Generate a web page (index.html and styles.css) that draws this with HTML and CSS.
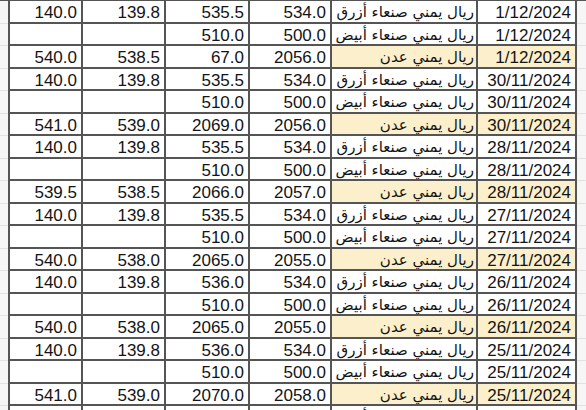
FILE: index.html
```html
<!DOCTYPE html>
<html lang="ar">
<head>
<meta charset="utf-8">
<link rel="stylesheet" href="styles.css">
</head>
<body>
<div class="sheet">
  <div class="row"><div class="gut"></div><div class="c">140.0</div><div class="c">139.8</div><div class="c">535.5</div><div class="c">534.0</div><div class="c ar" dir="rtl">ريال يمني صنعاء أزرق</div><div class="c">1/12/2024</div><div class="gut"></div></div>
  <div class="row"><div class="gut"></div><div class="c"></div><div class="c"></div><div class="c">510.0</div><div class="c">500.0</div><div class="c ar" dir="rtl">ريال يمني صنعاء أبيض</div><div class="c">1/12/2024</div><div class="gut"></div></div>
  <div class="row aden"><div class="gut"></div><div class="c">540.0</div><div class="c">538.5</div><div class="c">67.0</div><div class="c">2056.0</div><div class="c ar hl" dir="rtl">ريال يمني عدن</div><div class="c hl">1/12/2024</div><div class="gut"></div></div>

  <div class="row"><div class="gut"></div><div class="c">140.0</div><div class="c">139.8</div><div class="c">535.5</div><div class="c">534.0</div><div class="c ar" dir="rtl">ريال يمني صنعاء أزرق</div><div class="c">30/11/2024</div><div class="gut"></div></div>
  <div class="row"><div class="gut"></div><div class="c"></div><div class="c"></div><div class="c">510.0</div><div class="c">500.0</div><div class="c ar" dir="rtl">ريال يمني صنعاء أبيض</div><div class="c">30/11/2024</div><div class="gut"></div></div>
  <div class="row"><div class="gut"></div><div class="c">541.0</div><div class="c">539.0</div><div class="c">2069.0</div><div class="c">2056.0</div><div class="c ar hl" dir="rtl">ريال يمني عدن</div><div class="c hl">30/11/2024</div><div class="gut"></div></div>

  <div class="row"><div class="gut"></div><div class="c">140.0</div><div class="c">139.8</div><div class="c">535.5</div><div class="c">534.0</div><div class="c ar" dir="rtl">ريال يمني صنعاء أزرق</div><div class="c">28/11/2024</div><div class="gut"></div></div>
  <div class="row"><div class="gut"></div><div class="c"></div><div class="c"></div><div class="c">510.0</div><div class="c">500.0</div><div class="c ar" dir="rtl">ريال يمني صنعاء أبيض</div><div class="c">28/11/2024</div><div class="gut"></div></div>
  <div class="row"><div class="gut"></div><div class="c">539.5</div><div class="c">538.5</div><div class="c">2066.0</div><div class="c">2057.0</div><div class="c ar hl" dir="rtl">ريال يمني عدن</div><div class="c hl">28/11/2024</div><div class="gut"></div></div>

  <div class="row"><div class="gut"></div><div class="c">140.0</div><div class="c">139.8</div><div class="c">535.5</div><div class="c">534.0</div><div class="c ar" dir="rtl">ريال يمني صنعاء أزرق</div><div class="c">27/11/2024</div><div class="gut"></div></div>
  <div class="row"><div class="gut"></div><div class="c"></div><div class="c"></div><div class="c">510.0</div><div class="c">500.0</div><div class="c ar" dir="rtl">ريال يمني صنعاء أبيض</div><div class="c">27/11/2024</div><div class="gut"></div></div>
  <div class="row"><div class="gut"></div><div class="c">540.0</div><div class="c">538.0</div><div class="c">2065.0</div><div class="c">2055.0</div><div class="c ar hl" dir="rtl">ريال يمني عدن</div><div class="c hl">27/11/2024</div><div class="gut"></div></div>

  <div class="row"><div class="gut"></div><div class="c">140.0</div><div class="c">139.8</div><div class="c">536.0</div><div class="c">534.0</div><div class="c ar" dir="rtl">ريال يمني صنعاء أزرق</div><div class="c">26/11/2024</div><div class="gut"></div></div>
  <div class="row"><div class="gut"></div><div class="c"></div><div class="c"></div><div class="c">510.0</div><div class="c">500.0</div><div class="c ar" dir="rtl">ريال يمني صنعاء أبيض</div><div class="c">26/11/2024</div><div class="gut"></div></div>
  <div class="row"><div class="gut"></div><div class="c">540.0</div><div class="c">538.0</div><div class="c">2065.0</div><div class="c">2055.0</div><div class="c ar hl" dir="rtl">ريال يمني عدن</div><div class="c hl">26/11/2024</div><div class="gut"></div></div>

  <div class="row"><div class="gut"></div><div class="c">140.0</div><div class="c">139.8</div><div class="c">536.0</div><div class="c">534.0</div><div class="c ar" dir="rtl">ريال يمني صنعاء أزرق</div><div class="c">25/11/2024</div><div class="gut"></div></div>
  <div class="row"><div class="gut"></div><div class="c"></div><div class="c"></div><div class="c">510.0</div><div class="c">500.0</div><div class="c ar" dir="rtl">ريال يمني صنعاء أبيض</div><div class="c">25/11/2024</div><div class="gut"></div></div>
  <div class="row"><div class="gut"></div><div class="c">541.0</div><div class="c">539.0</div><div class="c">2070.0</div><div class="c">2058.0</div><div class="c ar hl" dir="rtl">ريال يمني عدن</div><div class="c hl">25/11/2024</div><div class="gut"></div></div>

  <div class="row"><div class="gut"></div><div class="c">140.0</div><div class="c">139.8</div><div class="c">536.0</div><div class="c">534.0</div><div class="c ar" dir="rtl">ريال يمني صنعاء أزرق</div><div class="c">24/11/2024</div><div class="gut"></div></div>
</div>
</body>
</html>
```

FILE: styles.css
```css
html, body {
  margin: 0;
  padding: 0;
  background: #ffffff;
}
body {
  width: 586px;
  height: 410px;
  overflow: hidden;
  font-family: "Liberation Sans", Arial, "DejaVu Sans", sans-serif;
  color: #141414;
}
.sheet {
  display: flex;
  flex-direction: column;
  border-top: 2px solid #555;
  margin-top: -1px;
}
.row {
  display: grid;
  grid-template-columns: 8px 75px 83px 84px 82px 146px 99px 1fr;
  height: 22.5px;
}
.gut {
  background: #f6f6f6;
  border-bottom: 1px solid #e2e2e2;
}
.row > .gut:first-child + .c {
  border-left: 2px solid #555;
}
.c {
  box-sizing: border-box;
  border-right: 2px solid #555;
  border-bottom: 2px solid #555;
  font-size: 17px;
  line-height: 20px;
  padding: 2px 4px 0 0;
  text-align: right;
  white-space: nowrap;
  overflow: hidden;
}
.ar {
  font-family: "DejaVu Sans", sans-serif;
  font-size: 15px;
  padding: 1px 2px 0 0;
  text-align: start;
}
.hl {
  background: #fcf0cc;
}
```
